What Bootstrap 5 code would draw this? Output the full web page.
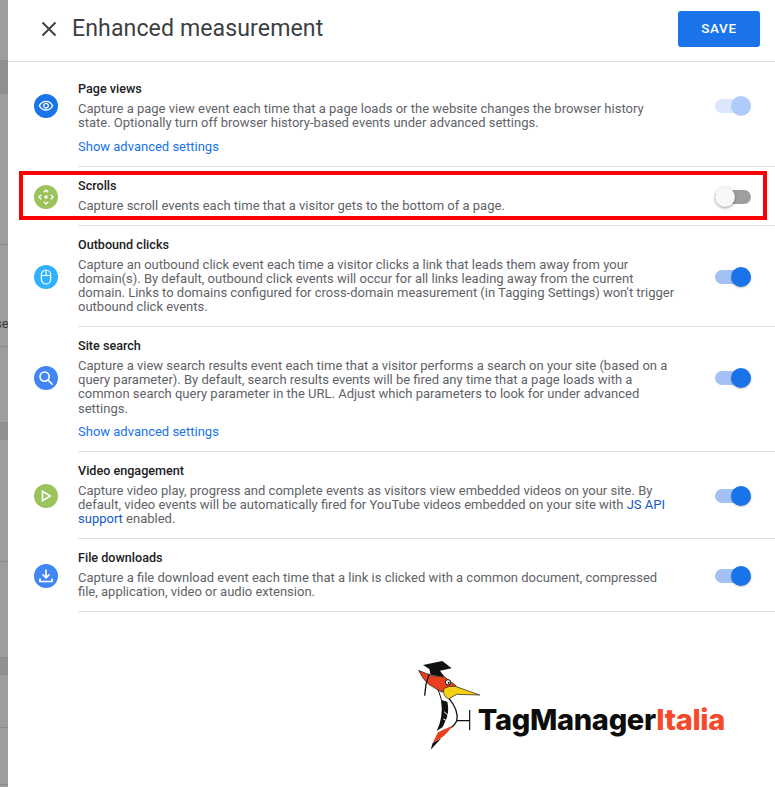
<!DOCTYPE html>
<html lang="en">
<head>
    <meta charset="UTF-8">
    <meta name="viewport" content="width=device-width, initial-scale=1.0">
    <title>Enhanced measurement</title>
    <link href="https://cdn.jsdelivr.net/npm/bootstrap@5.3.0/dist/css/bootstrap.min.css" rel="stylesheet">
    <style>
        html, body { height: 787px; overflow: hidden; background: #fff; }
        body { font-family: Roboto, "Liberation Sans", sans-serif; }

        /* page behind the drawer */
        .back-strip { width: 8px; height: 787px; background: #9c9e9e; overflow: hidden; flex: none; }
        .back-seg { border-bottom: 1px solid #8b8d8d; color: #3a3a3a; font-size: 13px; line-height: 16px; white-space: nowrap; }
        .back-dark { background: #8f9191; }
        .se-label { margin-left: -5px; padding-top: 71px; }

        .drawer { width: 767px; height: 787px; }
        .drawer-head { height: 62px; padding: 0 15px 4px 33px; border-bottom: 1px solid #e0e0e0; }
        .drawer-title { margin: 0 0 0 15px; font-size: 23.1px; line-height: 28px; font-weight: 400; color: #3c4043; letter-spacing: .1px; }
        .save-btn { width: 82px; height: 36px; padding: 0; border: 0; border-radius: 3px; background: #1a73e8; font-size: 13.5px; font-weight: 500; letter-spacing: .6px; }

        .rows { padding-top: 8px; }
        .em-row { position: relative; margin-left: 70px; padding: 10.5px 24px 12px 0; border-bottom: 1px solid #e0e0e0; }
        .em-ico { width: 24px; height: 24px; margin: 2px 20px 0 -44px; border-radius: 50%; flex: none; }
        .em-text { width: 600px; }
        .em-name { font-size: 12.6px; line-height: 16px; font-weight: 500; color: #202124; margin-bottom: 5px; }
        .em-desc { font-size: 13px; line-height: 14.2px; color: #5f6368; margin: 0; }
        .em-more { display: block; margin-top: 9.5px; font-size: 13px; line-height: 14px; color: #1a73e8; text-decoration: none; }
        .em-row:first-child .em-more { margin-top: 10.5px; }
        .em-link { color: #1558c9; text-decoration: none; }

        .tgl { position: relative; display: block; width: 36px; height: 14px; margin: 2px 0 0 auto; border-radius: 7px; background: #a3c1f5; flex: none; }
        .tgl::after { content: ""; position: absolute; top: -3px; right: 0; width: 20px; height: 20px; border-radius: 50%; background: #1a73e8; box-shadow: 0 1px 2px rgba(0,0,0,.25); }
        .tgl-dim { background: #dbe6fb; }
        .tgl-dim::after { background: #aecbfa; box-shadow: none; }
        .tgl-off { background: #9e9e9e; }
        .tgl-off::after { right: 16px; background: #f8f8f8; box-shadow: 0 1px 3px rgba(0,0,0,.4); }

        .red-box { position: absolute; left: -59px; right: 8px; top: 4px; bottom: 5px; border: 4.5px solid #fb0000; pointer-events: none; }

        .brand { margin: 43px 0 0 0; padding-right: 50px; }
        .brand-name { font-family: Inter, "Liberation Sans", sans-serif; font-size: 29px; line-height: 34px; font-weight: 800; color: #0d0d0d; letter-spacing: -.3px; margin: 48px 0 0 -16px; }
        .brand-name span { color: #f4492a; }
    </style>
</head>
<body>
    <div class="d-flex">
        <!-- strip of the page behind -->
        <div class="back-strip">
            <div class="back-seg" style="height:61px"></div>
            <div class="back-seg back-dark" style="height:33px"></div>
            <div class="back-seg" style="height:151px"></div>
            <div class="back-seg se-label" style="height:102px">se</div>
            <div class="back-seg" style="height:76px"></div>
            <div class="back-seg back-dark" style="height:17px"></div>
            <div class="back-seg" style="height:122px"></div>
            <div class="back-seg" style="height:96px"></div>
            <div class="back-seg back-dark" style="height:17px"></div>
            <div class="back-seg" style="height:53px"></div>
            <div class="back-seg" style="height:57px"></div>
        </div>

        <div class="drawer">
            <div class="drawer-head d-flex align-items-center">
                <svg width="16" height="16" viewBox="0 0 16 16" fill="none" stroke="#3c4043" stroke-width="1.9">
                    <path d="M1.5 1.5l13 13M14.5 1.5l-13 13"/>
                </svg>
                <h1 class="drawer-title">Enhanced measurement</h1>
                <button class="btn btn-primary save-btn ms-auto">SAVE</button>
            </div>

            <div class="rows">
                <div class="em-row">
                    <div class="d-flex align-items-center">
                        <div class="em-ico d-flex align-items-center justify-content-center" style="background:#1a73e8">
                            <svg width="16" height="16" viewBox="0 0 24 24" fill="#fff"><path d="M12 6c3.79 0 7.17 2.13 8.82 5.5C19.17 14.87 15.79 17 12 17s-7.17-2.13-8.82-5.5C4.83 8.13 8.21 6 12 6m0-2C7 4 2.73 7.11 1 11.5 2.73 15.89 7 19 12 19s9.27-3.11 11-7.5C21.27 7.11 17 4 12 4zm0 5c1.38 0 2.5 1.12 2.5 2.5S13.38 14 12 14s-2.5-1.12-2.5-2.5S10.62 9 12 9m0-2c-2.48 0-4.5 2.02-4.5 4.5S9.52 16 12 16s4.5-2.02 4.5-4.5S14.48 7 12 7z"/></svg>
                        </div>
                        <div class="em-text">
                            <div class="em-name">Page views</div>
                            <p class="em-desc">Capture a page view event each time that a page loads or the website changes the browser history state. Optionally turn off browser history-based events under advanced settings.</p>
                        </div>
                        <span class="tgl tgl-dim"></span>
                    </div>
                    <a class="em-more" href="#">Show advanced settings</a>
                </div>

                <div class="em-row">
                    <div class="d-flex align-items-center">
                        <div class="em-ico d-flex align-items-center justify-content-center" style="background:#9bc25b">
                            <svg width="16" height="16" viewBox="0 0 16 16" fill="none" stroke="#fff" stroke-width="1.4">
                                <circle cx="8" cy="8" r="1.8" fill="#fff" stroke="none"/>
                                <path d="M5.8 3.2L8 1l2.2 2.2M5.8 12.8L8 15l2.2-2.2M3.2 5.8L1 8l2.2 2.2M12.8 5.8L15 8l-2.2 2.2"/>
                            </svg>
                        </div>
                        <div class="em-text">
                            <div class="em-name">Scrolls</div>
                            <p class="em-desc">Capture scroll events each time that a visitor gets to the bottom of a page.</p>
                        </div>
                        <span class="tgl tgl-off"></span>
                    </div>
                    <div class="red-box"></div>
                </div>

                <div class="em-row">
                    <div class="d-flex align-items-center">
                        <div class="em-ico d-flex align-items-center justify-content-center" style="background:#2fb1fb">
                            <svg width="16" height="16" viewBox="0 0 16 16" fill="none" stroke="#fff" stroke-width="1.2">
                                <rect x="3.4" y="1" width="9.2" height="14" rx="4.6"/>
                                <path d="M8 1v5.5M3.4 6.5h9.2"/>
                            </svg>
                        </div>
                        <div class="em-text">
                            <div class="em-name">Outbound clicks</div>
                            <p class="em-desc">Capture an outbound click event each time a visitor clicks a link that leads them away from your domain(s). By default, outbound click events will occur for all links leading away from the current domain. Links to domains configured for cross-domain measurement (in Tagging Settings) won't trigger outbound click events.</p>
                        </div>
                        <span class="tgl"></span>
                    </div>
                </div>

                <div class="em-row">
                    <div class="d-flex align-items-center">
                        <div class="em-ico d-flex align-items-center justify-content-center" style="background:#4285f4">
                            <svg width="16" height="16" viewBox="0 0 16 16" fill="none" stroke="#fff" stroke-width="1.6">
                                <circle cx="6.6" cy="6.6" r="4.6"/>
                                <path d="M10 10l4.6 4.6"/>
                            </svg>
                        </div>
                        <div class="em-text">
                            <div class="em-name">Site search</div>
                            <p class="em-desc">Capture a view search results event each time that a visitor performs a search on your site (based on a query parameter). By default, search results events will be fired any time that a page loads with a common search query parameter in the URL. Adjust which parameters to look for under advanced settings.</p>
                        </div>
                        <span class="tgl"></span>
                    </div>
                    <a class="em-more" href="#">Show advanced settings</a>
                </div>

                <div class="em-row">
                    <div class="d-flex align-items-center">
                        <div class="em-ico d-flex align-items-center justify-content-center" style="background:#9bc25b">
                            <svg width="14" height="14" viewBox="0 0 14 14" fill="none" stroke="#fff" stroke-width="1.6">
                                <path d="M3.5 2.2v9.6L11.2 7z"/>
                            </svg>
                        </div>
                        <div class="em-text">
                            <div class="em-name">Video engagement</div>
                            <p class="em-desc">Capture video play, progress and complete events as visitors view embedded videos on your site. By default, video events will be automatically fired for YouTube videos embedded on your site with <a class="em-link" href="#">JS API support</a> enabled.</p>
                        </div>
                        <span class="tgl"></span>
                    </div>
                </div>

                <div class="em-row">
                    <div class="d-flex align-items-center">
                        <div class="em-ico d-flex align-items-center justify-content-center" style="background:#4285f4">
                            <svg width="16" height="16" viewBox="0 0 16 16" fill="none" stroke="#fff" stroke-width="1.7">
                                <path d="M8 1.5v8M4.6 6.4L8 9.8l3.4-3.4"/>
                                <path d="M2 10.5v3h12v-3"/>
                            </svg>
                        </div>
                        <div class="em-text">
                            <div class="em-name">File downloads</div>
                            <p class="em-desc">Capture a file download event each time that a link is clicked with a common document, compressed file, application, video or audio extension.</p>
                        </div>
                        <span class="tgl"></span>
                    </div>
                </div>
            </div>

            <div class="brand d-flex justify-content-end">
                <svg width="80" height="100" viewBox="0 0 240 300">
                    <!-- bird traced on a 3x grid -->
                    <path d="M65 90Q90 135 86 185Q84 205 74 222" fill="none" stroke="#111" stroke-width="3"/>
                    <path d="M105 130Q136 168 128 198Q118 220 90 226" fill="none" stroke="#111" stroke-width="4"/>
                    <path d="M82 135L100 140Q106 165 98 190L86 216L68 228Q88 190 82 135Z" fill="#111"/>
                    <path d="M90 170L108 186M88 192L104 200" fill="none" stroke="#fff" stroke-width="3"/>
                    <path d="M72 232L115 212Q100 236 80 250L56 264Z" fill="#e8401f"/>
                    <path d="M56 264L82 250L50 284Z" fill="#111"/>
                    <path d="M14 46L52 62L92 66L126 92L126 104L98 100L84 112L44 88Q24 70 14 46Z" fill="#e8401f" stroke="#111" stroke-width="2"/>
                    <path d="M27 30L85 18L113 40L78 47L92 66L50 60L46 42Z" fill="#111"/>
                    <path d="M46 56L36 88L32 122" fill="none" stroke="#111" stroke-width="4"/>
                    <path d="M90 100Q104 92 124 94L197 120L128 118L104 132Q84 122 90 100Z" fill="#f5d016" stroke="#111" stroke-width="2"/>
                    <circle cx="102" cy="82" r="8" fill="#fff" stroke="#111" stroke-width="3"/>
                    <circle cx="104" cy="83" r="3" fill="#111"/>
                    <path d="M128 197H166M167 165V226" fill="none" stroke="#111" stroke-width="3.5"/>
                </svg>
                <div class="brand-name">TagManager<span>Italia</span></div>
            </div>
        </div>
    </div>

    <script src="https://cdn.jsdelivr.net/npm/bootstrap@5.3.0/dist/js/bootstrap.bundle.min.js"></script>
</body>
</html>
